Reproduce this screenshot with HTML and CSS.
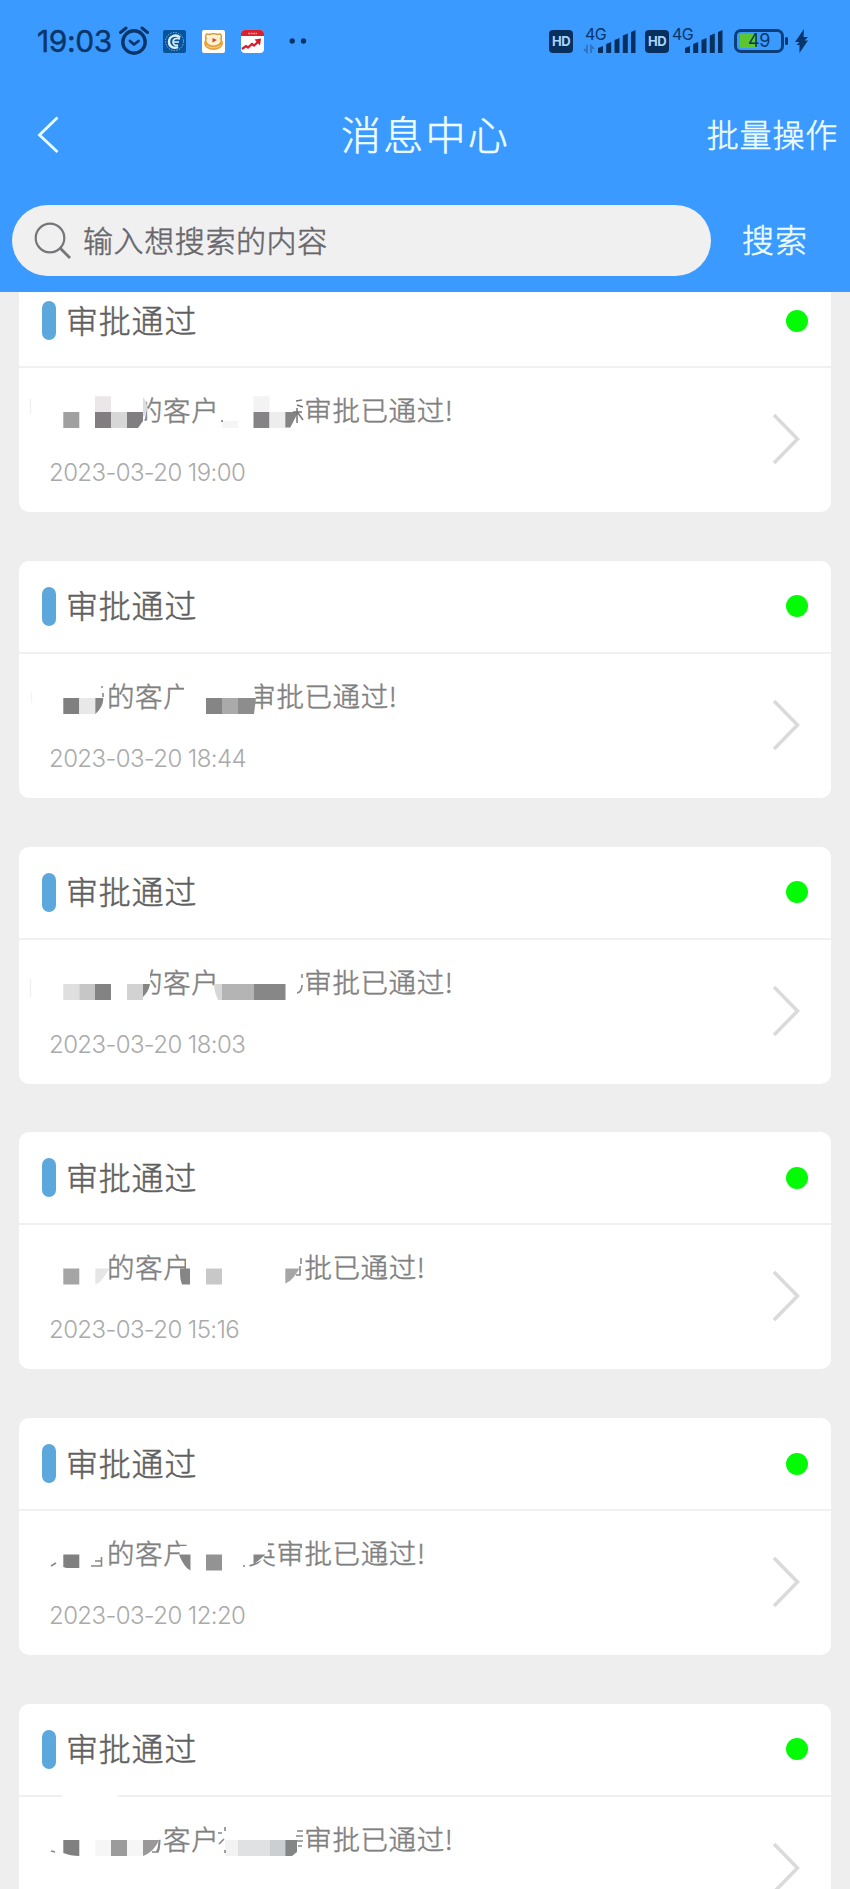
FILE: index.html
```html
<!DOCTYPE html>
<html lang="zh-CN">
<head>
    <meta charset="UTF-8">
    <meta name="viewport" content="width=device-width, initial-scale=1.0">
    <title>消息中心</title>
    <link rel="stylesheet" href="styles.css">
</head>
<body>
    <header class="header">
        <div class="status-bar">
            <div class="status-left">
                <span class="time">19:03</span>
                <svg class="alarm" width="32" height="30" viewBox="0 0 32 30" fill="none" stroke="#0a3568" stroke-linecap="round" stroke-linejoin="round">
                    <circle cx="16" cy="16" r="11.2" stroke-width="3.4"/>
                    <path d="M2.5 6.5 8 2M29.5 6.5 24 2" stroke-width="3"/>
                    <path d="M12 15l4 3.5 4.5-3.5" stroke-width="2.8"/>
                </svg>
                <svg class="app" width="23" height="23" viewBox="0 0 23 23" fill="none">
                    <rect width="23" height="23" rx="2" fill="#08549b"/>
                    <circle cx="11.5" cy="11.5" r="9" stroke="#8fc0e2" stroke-dasharray="1.3 1.4"/>
                    <path d="M17 7.5C13 3.5 6 6 6 12c0 5 5 7 9 5" stroke="#d8f0fb" stroke-width="2.4"/>
                    <path d="M17 9c-4-1.5-7 0-7 3s3 4 5 3M11 12h5" stroke="#d8f0fb" stroke-width="1.7"/>
                </svg>
                <svg class="app" width="23" height="23" viewBox="0 0 23 23" fill="none">
                    <rect width="23" height="23" rx="2" fill="#fffdf6"/>
                    <path d="M4 10C3 5 4 3 7 4.500c3-1 6-1 9 0C19 3 20 5 19 10" stroke="#d99a3a" stroke-width="1.5"/>
                    <ellipse cx="11.5" cy="13" rx="9.500" ry="7" fill="#e5a23b"/>
                    <ellipse cx="11.5" cy="10.5" rx="7" ry="5" fill="#fff0d2"/>
                    <path d="M10.5 8l4.500 2-4.500 2.500z" fill="#cf4a28"/>
                    <path d="M4.500 15.500c4 3 10 3 14 0" stroke="#f8d79c" stroke-width="1"/>
                </svg>
                <svg class="app" width="23" height="23" viewBox="0 0 23 23" fill="none">
                    <rect width="23" height="23" rx="4" fill="#fff"/>
                    <path d="M0 6V4a4 4 0 0 1 4-4h15a4 4 0 0 1 4 4v2z" fill="#d9222f"/>
                    <path d="M7 3.5h9" stroke="#f39a9d" stroke-width="1.5" stroke-dasharray="2 .6"/>
                    <path d="M1 19l4-3 2 1.5 4-3.5 2 1.5 5-4.5" stroke="#cf1f2b" stroke-width="2.2"/>
                    <path d="M13.5 9.5l6.5-1-1 7z" fill="#cf1f2b"/>
                </svg>
                <svg class="more" width="18" height="6" viewBox="0 0 18 6" fill="#0a3568">
                    <circle cx="3.2" cy="3" r="2.7"/>
                    <circle cx="14.5" cy="3" r="2.7"/>
                </svg>
            </div>
            <div class="status-right">
                <span class="hd">HD</span>
                <span class="signal signal-data">
                    <span class="net">4G</span>
                    <svg width="54" height="26" viewBox="0 0 54 26">
                        <path d="M5 17v7l-3-3M9 25v-7l3 3" fill="none" stroke="#2f73bd" stroke-width="1.8"/>
                        <path d="M16 20l5-2v7h-5zM24.2 16l5-2v11h-5zM32.5 12l5-2v15h-5zM40.8 7.5l5-2V25h-5zM49 4l4.5-2v23H49z" fill="#08305f"/>
                    </svg>
                </span>
                <span class="hd">HD</span>
                <span class="signal">
                    <span class="net">4G</span>
                    <svg width="54" height="26" viewBox="0 0 54 26">
                        <path d="M16 20l5-2v7h-5zM24.2 16l5-2v11h-5zM32.5 12l5-2v15h-5zM40.8 7.5l5-2V25h-5zM49 4l4.5-2v23H49z" fill="#08305f"/>
                    </svg>
                </span>
                <span class="battery">49</span>
                <svg class="bolt" width="14" height="24" viewBox="0 0 14 24" fill="#0a3568">
                    <path d="M9 0 0 13h4.5L1.5 16h3L4.5 24 13 11.5H9.5L13 8H8.5z"/>
                </svg>
            </div>
        </div>

        <div class="nav-bar">
            <svg class="back" width="24" height="40" viewBox="0 0 24 40" fill="none" stroke="#e9ffff" stroke-width="2.8">
                <path d="M21.5 2.5 3.5 20l18 17"/>
            </svg>
            <h1 class="nav-title">消息中心</h1>
            <a class="nav-action">批量操作</a>
        </div>

        <div class="search-bar">
            <div class="search-box">
                <svg width="38" height="38" viewBox="0 0 38 38" fill="none" stroke="#77757a" stroke-width="2.2">
                    <circle cx="16" cy="16" r="14.3"/>
                    <path d="M26 26l10 10" stroke-width="2.8"/>
                </svg>
                <span class="placeholder">输入想搜索的内容</span>
            </div>
            <a class="search-btn">搜索</a>
        </div>
    </header>

    <main class="list">
        <section class="card">
            <div class="card-head">
                <i class="bar"></i>
                <h2 class="card-title">审批通过</h2>
                <i class="dot"></i>
            </div>
            <div class="card-body">
                <div class="info">
                    <p class="message"><span class="name3"></span>的客户<span class="name3"></span>审批已通过!</p>
                    <p class="date">2023-03-20 19:00</p>
                </div>
                <svg class="arrow" width="28" height="52" viewBox="0 0 28 52"><path d="M2 2l23.5 24L2 50"/></svg>
            </div>
            <svg class="mosaic" width="460" height="50" viewBox="0 0 460 50">
                <path d="M130 5h14v12l2 9-3 14h-13z" fill="#fff"/>
                <path d="M30.5 12v15" stroke="#f1f1f1" stroke-width="1.5"/>
                <path d="M63.3 25h16v16h-16z" fill="#a0a0a0"/>
                <path d="M95 9.3h16V25H95z" fill="#ebe6e8"/>
                <path d="M95 25h16v16H95z" fill="#817d80"/>
                <path d="M111 25h16v16h-16z" fill="#d7d7d8"/>
                <path d="M127 25h16v9l-5 7h-11z" fill="#807e80"/>
                <path d="M143 10c4 5 5 9 3 17l-3 3z" fill="#dedede"/>
                <path d="M222 34h16v7h-16z" fill="#f5f5f5"/>
                <path d="M253.5 9.3h16V25h-16z" fill="#f3f3f3"/>
                <path d="M253.5 25h16v16h-16z" fill="#858385"/>
                <path d="M269.5 25h16v16h-16z" fill="#ededee"/>
                <path d="M285.3 25h13l-8 15.5h-5z" fill="#858385"/>
                <path d="M222 33v2M296 14l6-1M297 18l6 2M293 25h9M297 21v15M298 26l5 7" stroke="#777" stroke-width="1.5" fill="none"/>
            </svg>
        </section>

        <section class="card">
            <div class="card-head">
                <i class="bar"></i>
                <h2 class="card-title">审批通过</h2>
                <i class="dot"></i>
            </div>
            <div class="card-body">
                <div class="info">
                    <p class="message"><span class="name2"></span>的客户<span class="name2"></span>审批已通过!</p>
                    <p class="date">2023-03-20 18:44</p>
                </div>
                <svg class="arrow" width="28" height="52" viewBox="0 0 28 52"><path d="M2 2l23.5 24L2 50"/></svg>
            </div>
            <svg class="mosaic" width="460" height="50" viewBox="0 0 460 50">
                <path d="M184 5h10v35h-24V22h14zM240 5h13l3 20-4 15h-12z" fill="#fff"/>
                <path d="M31.5 18v12" stroke="#f4f4f4" stroke-width="1.5"/>
                <path d="M63.3 25h16v16h-16z" fill="#808080"/>
                <path d="M79.3 25h16v16h-16z" fill="#e8e8e8"/>
                <path d="M95.3 25h8c0 5-2 11-8 16z" fill="#848484"/>
                <path d="M206 25h16v16h-16z" fill="#858585"/>
                <path d="M222 25h16v16h-16z" fill="#aaa"/>
                <path d="M238 25h18l-2 16h-16z" fill="#8d8d8d"/>
                <path d="M101 14h2M103 20v4" stroke="#888" stroke-width="1.6" fill="none"/>
            </svg>
        </section>

        <section class="card">
            <div class="card-head">
                <i class="bar"></i>
                <h2 class="card-title">审批通过</h2>
                <i class="dot"></i>
            </div>
            <div class="card-body">
                <div class="info">
                    <p class="message"><span class="name3"></span>的客户<span class="name3"></span>审批已通过!</p>
                    <p class="date">2023-03-20 18:03</p>
                </div>
                <svg class="arrow" width="28" height="52" viewBox="0 0 28 52"><path d="M2 2l23.5 24L2 50"/></svg>
            </div>
            <svg class="mosaic" width="460" height="50" viewBox="0 0 460 50">
                <path d="M130 5h20v20l2 5-2 10h-20z" fill="#fff"/>
                <path d="M30.5 20v18" stroke="#f1f1f1" stroke-width="1.5"/>
                <path d="M63.3 25h16v16h-16z" fill="#dfdfdf"/>
                <path d="M79.3 25H95v16H79.3z" fill="#c6c6c6"/>
                <path d="M95 25h16v16H95z" fill="#838383"/>
                <path d="M127 25h16v16h-16z" fill="#d2d2d2"/>
                <path d="M143 25h7c-1 6-4 10-7 13z" fill="#858585"/>
                <path d="M214 25h8v16h-4c-2-5-4-10-4-16z" fill="#d7d7d7"/>
                <path d="M222 25h31.5v16H222z" fill="#b4b4b4"/>
                <path d="M253.5 25h32v16h-32z" fill="#878787"/>
                <path d="M302 15v4M297 34c3 0 5-4 5-8" stroke="#888" stroke-width="1.6" fill="none"/>
            </svg>
        </section>

        <section class="card">
            <div class="card-head">
                <i class="bar"></i>
                <h2 class="card-title">审批通过</h2>
                <i class="dot"></i>
            </div>
            <div class="card-body">
                <div class="info">
                    <p class="message"><span class="name2"></span>的客户<span class="name3"></span>审批已通过!</p>
                    <p class="date">2023-03-20 15:16</p>
                </div>
                <svg class="arrow" width="28" height="52" viewBox="0 0 28 52"><path d="M2 2l23.5 24L2 50"/></svg>
            </div>
            <svg class="mosaic" width="460" height="50" viewBox="0 0 460 50">
                <path d="M186 5h8v35h-17V25h9zM275 5h29.5v36H275z" fill="#fff"/>
                <path d="M63.3 24.5h16v16h-16z" fill="#a5a5a5"/>
                <path d="M95.3 24.5h14c-3 5-6 10-10 14l-4 2z" fill="#e6e6e6"/>
                <path d="M180 24.5h10v16h-8c-2-5-2-10-2-16z" fill="#858585"/>
                <path d="M206 24.5h16v16h-16z" fill="#c8c8c8"/>
                <path d="M285.3 24.5h14c-3 6-7 11-12 14l-2 1z" fill="#a6a6a6"/>
                <path d="M301 14v6M300 22v9h-4" stroke="#888" stroke-width="1.6" fill="none"/>
            </svg>
        </section>

        <section class="card">
            <div class="card-head">
                <i class="bar"></i>
                <h2 class="card-title">审批通过</h2>
                <i class="dot"></i>
            </div>
            <div class="card-body">
                <div class="info">
                    <p class="message"><span class="name2"></span>的客户<span class="name2"></span>英审批已通过!</p>
                    <p class="date">2023-03-20 12:20</p>
                </div>
                <svg class="arrow" width="28" height="52" viewBox="0 0 28 52"><path d="M2 2l23.5 24L2 50"/></svg>
            </div>
            <svg class="mosaic" width="460" height="50" viewBox="0 0 460 50">
                <path d="M180 16h14v26h-10l-5-10zM248 5h20v16l-5 4 2 4-10 4h-7z" fill="#fff"/>
                <path d="M63.3 24.500h16V38h-13l-3-1z" fill="#808080"/>
                <path d="M179 24.5h11.5v16c-4-2-8-7-11.5-16z" fill="#858585"/>
                <path d="M206 24.5h16v16h-16z" fill="#939393"/>
                <path d="M253.5 24.5h12l-7 6-5 4z" fill="#858585"/>
                <path d="M51 36l5-3M91 36h10.500v-9M95 31h6M243 36h2" stroke="#888" stroke-width="1.6" fill="none"/>
            </svg>
        </section>

        <section class="card">
            <div class="card-head">
                <i class="bar"></i>
                <h2 class="card-title">审批通过</h2>
                <i class="dot"></i>
            </div>
            <div class="card-body">
                <div class="info">
                    <p class="message"><span class="name3"></span>的客户<span class="name3"></span>审批已通过!</p>
                </div>
                <svg class="arrow" width="28" height="52" viewBox="0 0 28 52"><path d="M2 2l23.5 24L2 50"/></svg>
            </div>
            <svg class="mosaic mosaic-tall" width="460" height="75" viewBox="0 -25 460 75">
                <path d="M62 -25h56v8H62zM130 5h33v18l-4 1-4 16h-25z" fill="#fff"/>
                <path d="M63.3 24h16v16c-6 0-11-1-16-3z" fill="#808080"/>
                <path d="M95.3 24h16v16h-16zM127 24h16v16h-16z" fill="#f6f6f6"/>
                <path d="M111 24h16v16h-16z" fill="#9b9b9b"/>
                <path d="M143 24h16c-3 7-8 13-16 16z" fill="#999"/>
                <path d="M225 24h13v16h-13z" fill="#f3f3f3"/>
                <path d="M238 24h31.5v16H238z" fill="#dfe1e2"/>
                <path d="M269.5 24h16v16h-16z" fill="#cbcfd1"/>
                <path d="M285.3 24H297v12l-5 4h-6.7z" fill="#848686"/>
                <path d="M51 35l4 1M152 36h6c1-3 1.5-7 1.500-12M218 17h4M225 11v4M219 28l5-5M225 34v3M297 15h6M296 20h7M297 25h6M298 30h4" stroke="#888" stroke-width="1.6" fill="none"/>
            </svg>
        </section>
    </main>
</body>
</html>
```
FILE: styles.css
```css
* {
    box-sizing: border-box;
}
body {
    margin: 0;
    width: 850px;
    height: 1889px;
    overflow: hidden;
    background-color: #eee;
    font-family: "Noto Sans CJK SC", sans-serif;
    font-weight: 300;
}
h1, h2, p {
    margin: 0;
    font-weight: 300;
}
svg {
    display: block;
    flex: none;
}

/* the light weight is a bit too thin on its own */
.nav-title, .nav-action, .search-btn, .placeholder, .card-title, .message {
    -webkit-text-stroke: 0.5px currentColor;
}

/* header */
.header {
    position: relative;
    z-index: 2;
    height: 292px;
    background-color: #3b9aff;
    color: #efffff;
}
.status-bar {
    display: flex;
    justify-content: space-between;
    height: 82px;
    padding: 0 41px 0 37px;
    color: #0a3568;
    font-family: Inter, sans-serif;
}
.status-left, .status-right {
    display: flex;
    align-items: center;
}
.time {
    width: 81px;
    font-size: 30px;
    font-weight: 400;
    letter-spacing: -0.4px;
    white-space: nowrap;
    -webkit-text-stroke: 0.4px currentColor;
}
.app {
    margin-left: 16px;
}
.alarm + .app {
    margin-left: 13px;
}
.more {
    margin-left: 25px;
}
.hd {
    width: 24px;
    height: 23px;
    border-radius: 4px;
    background-color: #08305f;
    color: #a9d4ff;
    font-size: 13px;
    font-weight: 700;
    line-height: 23px;
    letter-spacing: -0.5px;
    text-align: center;
}
.signal {
    position: relative;
    margin: 0 11px 0 0;
}
.signal-data {
    margin: 0 9px;
}
.net {
    position: absolute;
    left: 3px;
    top: -4px;
    font-size: 16px;
    font-weight: 400;
    line-height: 20px;
    letter-spacing: -0.5px;
}
.battery {
    position: relative;
    width: 50px;
    height: 24px;
    margin-right: 11px;
    border: 3px solid #0a3f7c;
    border-radius: 7px;
    background: linear-gradient(#5ac72e, #5ac72e) 3px 2px / 18px 14px no-repeat;
    font-size: 18px;
    line-height: 18px;
    font-weight: 400;
    letter-spacing: -0.5px;
    text-align: center;
}
.battery::after {
    content: "";
    position: absolute;
    right: -7px;
    top: 5px;
    width: 3px;
    height: 8px;
    border-radius: 2px;
    background-color: #0a3568;
}
.nav-bar {
    display: grid;
    grid-template-columns: 200px 1fr 200px;
    align-items: center;
    height: 106px;
    padding: 0 12px 0 36px;
}
.nav-title {
    padding: 0 23px 4px 0;
    font-size: 40px;
    line-height: 60px;
    letter-spacing: 2.3px;
    text-align: center;
}
.nav-action {
    padding-bottom: 4px;
    font-size: 32px;
    letter-spacing: 0.8px;
    text-align: right;
    white-space: nowrap;
}
.search-bar {
    display: flex;
    align-items: center;
    padding: 17px 12px 0;
}
.search-box {
    display: flex;
    align-items: center;
    gap: 11px;
    width: 699px;
    height: 71px;
    padding-left: 22px;
    border-radius: 36px;
    background-color: #f0f0f1;
    color: #68666a;
}
.placeholder {
    padding-bottom: 4px;
    font-size: 30px;
    letter-spacing: 0.6px;
    line-height: 40px;
}
.search-btn {
    margin-left: 31px;
    padding-bottom: 5px;
    font-size: 32px;
    letter-spacing: 1px;
}

/* messages, the first one is scrolled under the header */
.list {
    display: flex;
    flex-direction: column;
    gap: 48.8px;
    margin-top: -17px;
    padding: 0 19px;
}
.card {
    position: relative;
    flex: none;
    height: 237px;
    border-radius: 10px;
    background-color: #fff;
}
.card-head {
    display: flex;
    align-items: center;
    height: 93px;
    padding: 0 23px;
    border-bottom: 2px solid #f0f0f0;
}
.bar {
    width: 14px;
    height: 39px;
    border-radius: 7px;
    background-color: #5ca8dc;
}
.card-title {
    margin-left: 10px;
    padding-bottom: 4px;
    color: #606060;
    font-size: 32px;
    line-height: 44px;
    letter-spacing: 0.8px;
}
.dot {
    width: 22px;
    height: 22px;
    margin-left: auto;
    border-radius: 50%;
    background-color: #04fb06;
}
.card-body {
    display: flex;
    justify-content: space-between;
    padding: 21px 31px 0;
}
.message {
    color: #808080;
    font-size: 27.5px;
    line-height: 40px;
    letter-spacing: 0.6px;
    white-space: nowrap;
}
.name2, .name3 {
    display: inline-block;
    width: 57px;
}
.name3 {
    width: 85px;
}
.date {
    margin: 29px 0 0 -1px;
    color: #aaa;
    font-family: Inter, sans-serif;
    font-size: 24px;
    line-height: 30px;
    letter-spacing: -0.6px;
}
.arrow {
    margin-top: 24px;
    fill: none;
    stroke: #dadada;
    stroke-width: 3.5;
}
.mosaic {
    position: absolute;
    left: -19px;
    top: 112px;
}
.mosaic-tall {
    top: 87px;
}
```
